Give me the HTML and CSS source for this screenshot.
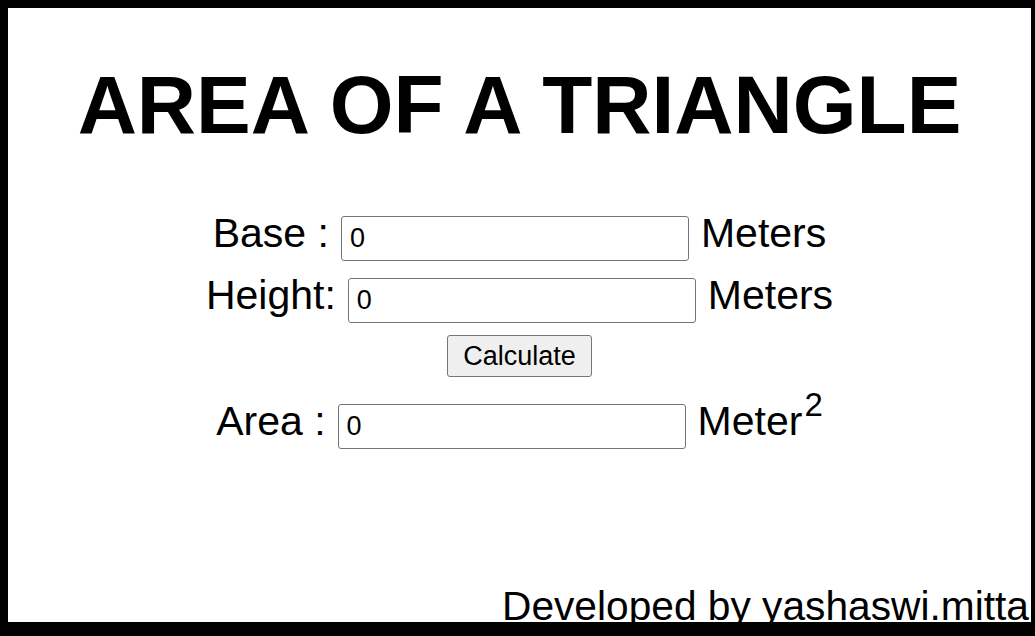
FILE: index.html
```html
<!DOCTYPE html>
<html>
<head>
<meta charset="utf-8">
<link rel="stylesheet" href="styles.css">
</head>
<body>
<div class="frame">
  <h1 class="title">AREA OF A TRIANGLE</h1>
  <div class="form">
    <div class="row"><span class="label">Base :</span><input class="field" type="text" value="0"><span class="unit">Meters</span></div>
    <div class="row"><span class="label">Height:</span><input class="field" type="text" value="0"><span class="unit">Meters</span></div>
    <div class="row btnrow"><button class="btn">Calculate</button></div>
    <div class="row"><span class="label">Area :</span><input class="field" type="text" value="0"><span class="unit">Meter<sup class="sup">2</sup></span></div>
  </div>
  <div class="footer">Developed by yashaswi.mitta</div>
</div>
</body>
</html>
```
FILE: styles.css
```css
html, body {
  margin: 0;
  padding: 0;
  background: #000;
}
.frame {
  box-sizing: border-box;
  width: 1035px;
  height: 636px;
  border-style: solid;
  border-color: #000;
  border-width: 8px 4px 14px 8px;
  background: #fff;
  overflow: hidden;
  display: flex;
  flex-direction: column;
  font-family: "Liberation Sans", Arial, sans-serif;
  color: #000;
}
.title {
  margin: 51px 0 0 0;
  font-size: 82px;
  font-weight: bold;
  line-height: 92px;
  text-align: center;
}
.form {
  margin-top: 56px;
  display: flex;
  flex-direction: column;
  align-items: center;
}
.row {
  display: flex;
  align-items: center;
  justify-content: center;
  height: 62px;
  white-space: nowrap;
}
.label, .unit {
  font-size: 41px;
  line-height: 40px;
  margin-bottom: 10px;
}
.label {
  margin-right: 12px;
}
.unit {
  margin-left: 12px;
}
.field {
  box-sizing: border-box;
  width: 348px;
  height: 45px;
  margin: 0;
  border: 1px solid #767676;
  border-radius: 3px;
  padding: 0 8px;
  font-family: "Liberation Sans", Arial, sans-serif;
  font-size: 27px;
  color: #000;
  background: #fff;
}
.btnrow {
  height: 64px;
  align-items: flex-start;
  padding-top: 4px;
  box-sizing: border-box;
}
.btn {
  box-sizing: border-box;
  width: 145px;
  height: 42px;
  background: #efefef;
  border: 1px solid #767676;
  border-radius: 3px;
  font-family: "Liberation Sans", Arial, sans-serif;
  font-size: 27px;
  color: #000;
  padding: 0;
}
.sup {
  font-size: 33px;
  line-height: 0;
  vertical-align: 19px;
  margin-left: 2px;
}
.footer {
  margin-top: auto;
  margin-left: 494px;
  margin-bottom: -7px;
  font-size: 40.7px;
  line-height: 46px;
  white-space: nowrap;
}
```
